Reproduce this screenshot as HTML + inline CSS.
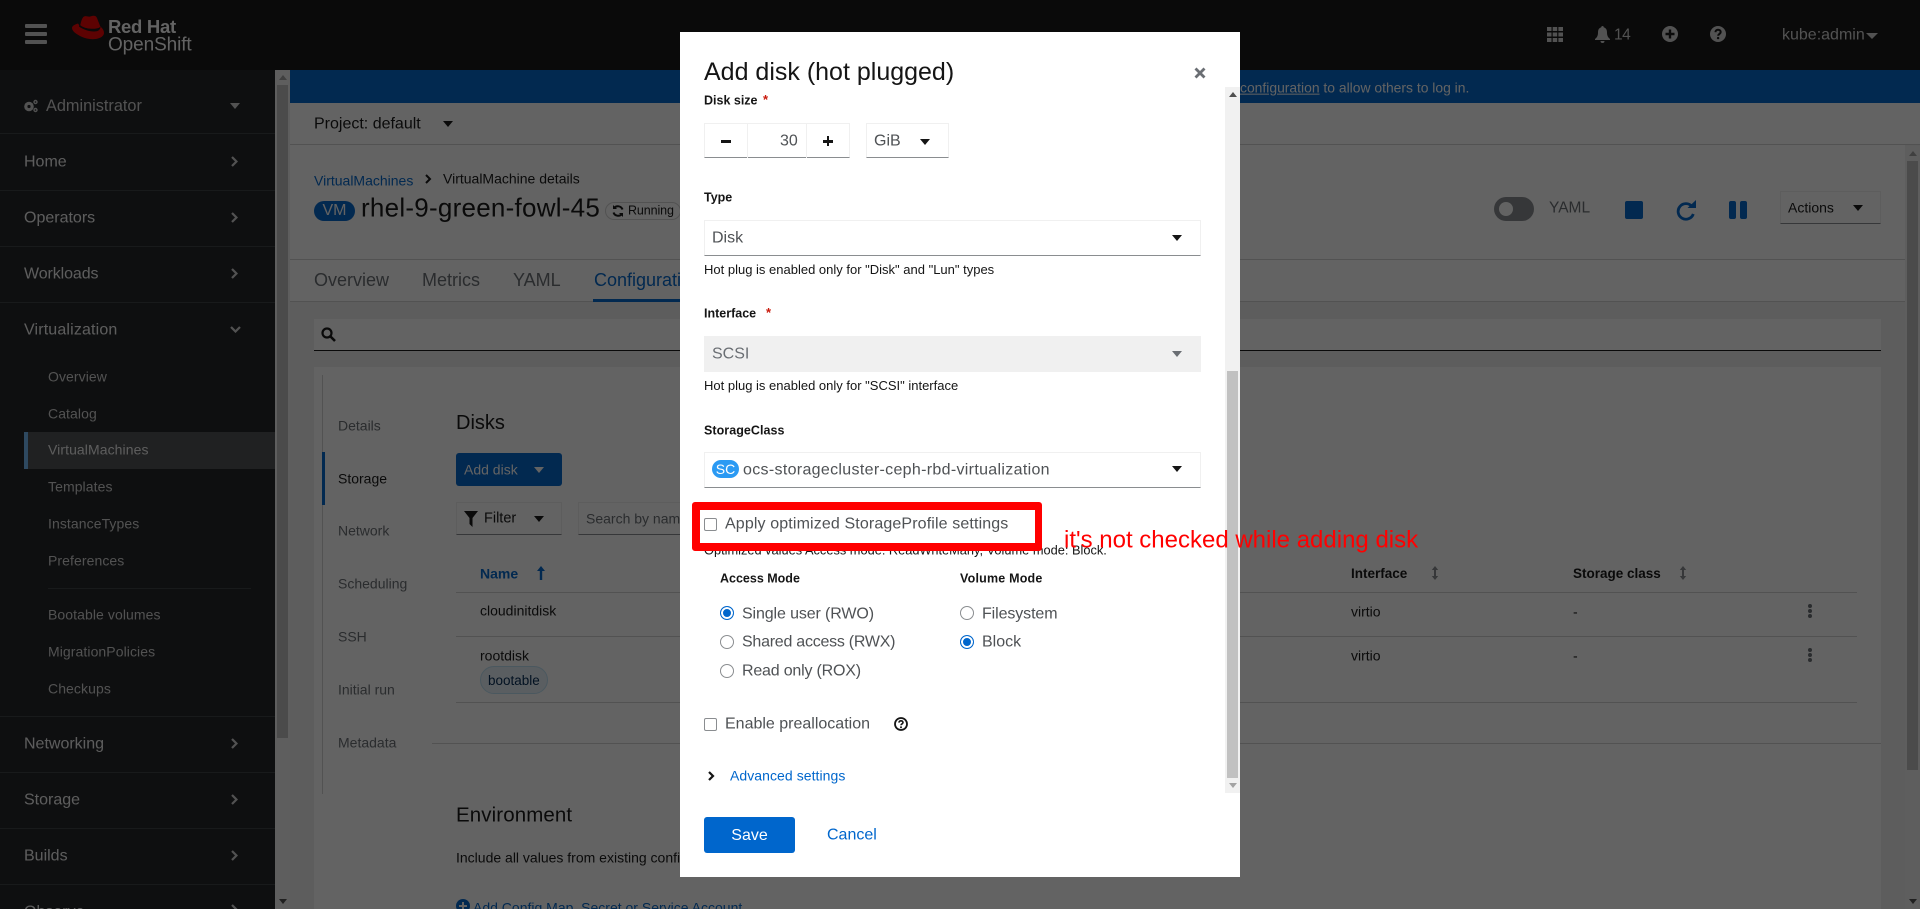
<!DOCTYPE html>
<html lang="en"><head><meta charset="utf-8"><title>Add disk</title>
<style>
*{box-sizing:border-box}
html,body{margin:0;padding:0;width:1920px;height:909px;overflow:hidden;background:#fff;font-family:"Liberation Sans",sans-serif;color:#151515}
.a{position:absolute}
.t{position:absolute;white-space:nowrap;line-height:1.2;transform:translateY(calc(-50% + 1px))}
svg{display:block}
#page{position:absolute;left:0;top:0;width:1920px;height:909px;overflow:hidden}
.side{color:#f0f0f0;font-size:16px}
.sub{color:#d2d2d2;font-size:14px;letter-spacing:.08px}
.ln{position:absolute;left:0;width:275px;height:1px;background:#3c3f42}
.nav{color:#6a6e73;font-size:14px}
.hr{position:absolute;height:1px;background:#d2d2d2}
.lbl{font-size:12.5px;font-weight:700;color:#151515}
.help{font-size:13px;color:#151515}
.sel{position:absolute;left:704px;width:497px;background:#fff;border:1px solid #f0f0f0;border-bottom:1px solid #8a8d90}
.car{position:absolute;width:0;height:0;border-left:5.5px solid transparent;border-right:5.5px solid transparent;border-top:6px solid #151515}
.radio{position:absolute;width:14px;height:14px;border-radius:50%;background:#fff;border:1px solid #8a8d90}
.radio.on{border:1px solid #06c;box-shadow:inset 0 0 0 2px #fff;background:#06c}
.cb{position:absolute;width:13px;height:13px;border:1px solid #8a8d90;border-radius:2px;background:#fff}
</style></head><body>
<div id="page">
<!-- header -->
<div class="a" style="left:0;top:0;width:1920px;height:70px;background:#151515"></div>
<div class="a" style="left:25px;top:24px;width:22px;height:4px;background:#d2d2d2;border-radius:1px"></div>
<div class="a" style="left:25px;top:32px;width:22px;height:4px;background:#d2d2d2;border-radius:1px"></div>
<div class="a" style="left:25px;top:40px;width:22px;height:4px;background:#d2d2d2;border-radius:1px"></div>
<svg class="a" style="left:71px;top:14px" width="34" height="26" viewBox="0 0 34 26"><path d="M9 12C10 8 11 3.500 13 2.500C15 1.500 17 3 19 2.500C22 1.500 25 1 26 4L29.500 13C25 16 14 15 9 12Z" fill="#e00"/><path d="M7 9.500C3.500 10.500 1 12 1 14C1 17 5 20 10 22.500C15 25 22 26 27 24.500C31 23.500 33 21 33 19C33 16 31 14 29.500 12.500C30 15 27 17 21 16.500C15 16 9 13 7 9.500Z" fill="#e00"/><path d="M8.500 10.500C8.200 11.500 8 12 8 12.500C12 15.500 18 17.500 23 17.500C27 17.500 29.500 16 29 13C27.500 15 24 15.500 20 15C15 14.500 11 13 8.500 10.500Z" fill="#151515"/></svg>
<div class="t" style="left:108px;top:26px;font-size:18.500px;font-weight:700;color:#fff;letter-spacing:-.3px">Red Hat</div>
<div class="t" style="left:108px;top:45px;font-size:19px;color:#fff;letter-spacing:-.1px">OpenShift</div>
<svg class="a" style="left:1547px;top:27px" width="16" height="15" viewBox="0 0 16 15" fill="#d2d2d2"><rect x="0" y="0" width="4.500" height="4"/><rect x="5.700" y="0" width="4.500" height="4"/><rect x="11.400" y="0" width="4.600" height="4"/><rect x="0" y="5.500" width="4.500" height="4"/><rect x="5.700" y="5.500" width="4.500" height="4"/><rect x="11.400" y="5.500" width="4.600" height="4"/><rect x="0" y="11" width="4.500" height="4"/><rect x="5.700" y="11" width="4.500" height="4"/><rect x="11.400" y="11" width="4.600" height="4"/></svg>
<svg class="a" style="left:1595px;top:26px" width="15" height="17" viewBox="0 0 15 17" fill="#d2d2d2"><path d="M7.500 0c-.8 0-1.300.6-1.300 1.400C3.800 2 3 4 3 6.500c0 3-1 5-3 6.500v1h15v-1c-2-1.500-3-3.500-3-6.500 0-2.500-.8-4.500-3.200-5.100C8.800.6 8.300 0 7.500 0zM5.500 15a2 2 0 0 0 4 0z"/></svg>
<div class="t" style="left:1614px;top:35px;font-size:15.500px;color:#d2d2d2;letter-spacing:-.5px">14</div>
<svg class="a" style="left:1662px;top:26px" width="16" height="16" viewBox="0 0 16 16"><circle cx="8" cy="8" r="8" fill="#d2d2d2"/><path d="M8 3.500v9M3.500 8h9" stroke="#151515" stroke-width="2.400"/></svg>
<svg class="a" style="left:1710px;top:26px" width="16" height="16" viewBox="0 0 16 16"><circle cx="8" cy="8" r="8" fill="#d2d2d2"/><path d="M5.400 6.200C5.500 4.600 6.600 3.700 8 3.700s2.700.8 2.700 2.300c0 1.800-2.500 2-2.500 3.700" fill="none" stroke="#151515" stroke-width="2"/><circle cx="8.100" cy="12.100" r="1.200" fill="#151515"/></svg>
<div class="t" style="left:1782px;top:34px;font-size:16px;color:#d2d2d2">kube:admin</div>
<div class="car" style="left:1866px;top:33px;border-top-color:#d2d2d2;border-left-width:6px;border-right-width:6px"></div>

<!-- main white -->
<div class="a" style="left:275px;top:70px;width:1645px;height:839px;background:#f0f0f0"></div>
<div class="a" style="left:290px;top:70px;width:1630px;height:33px;background:#06c"></div>
<div class="t" style="left:1240px;top:87px;font-size:13.900px;color:#fff;white-space:nowrap"><span style="text-decoration:underline">configuration</span> to allow others to log in.</div>
<div class="a" style="left:290px;top:103px;width:1630px;height:42px;background:#fff;border-bottom:1px solid #d2d2d2"></div>
<div class="t" style="left:314px;top:123px;font-size:16px">Project: default</div>
<div class="car" style="left:443px;top:121px"></div>
<div class="a" style="left:290px;top:145px;width:1615px;height:157px;background:#fff"></div>
<div class="t" style="left:314px;top:180px;font-size:14px;color:#06c">VirtualMachines</div>
<svg class="a" style="left:425px;top:174px" width="7" height="10" viewBox="0 0 7 10"><path d="M1 1l4 4-4 4" fill="none" stroke="#151515" stroke-width="2"/></svg>
<div class="t" style="left:443px;top:178px;font-size:14px">VirtualMachine details</div>
<div class="a" style="left:314px;top:201px;width:41px;height:20px;border-radius:10px;background:#06c;color:#fff;font-size:16px;line-height:20px;text-align:center">VM</div>
<div class="t" style="left:361px;top:207px;font-size:26px;letter-spacing:.25px">rhel-9-green-fowl-45</div>
<div class="a" style="left:605px;top:202px;width:76px;height:18px;border:1px solid #d2d2d2;border-radius:9px"></div>
<svg class="a" style="left:612px;top:205px" width="12" height="12" viewBox="0 0 12 12"><path d="M10.500 4.500A5 5 0 0 0 2 3M1.500 7.500A5 5 0 0 0 10 9" fill="none" stroke="#151515" stroke-width="2"/><path d="M1 0v4h4zM11 12V8H7z" fill="#151515"/></svg>
<div class="t" style="left:628px;top:210px;font-size:12.500px;letter-spacing:-.1px">Running</div>
<div class="a" style="left:1494px;top:197px;width:40px;height:24px;border-radius:12px;background:#8a8d90"></div>
<div class="a" style="left:1499px;top:202px;width:14px;height:14px;border-radius:50%;background:#fff"></div>
<div class="t" style="left:1549px;top:208px;font-size:15.500px;color:#6a6e73">YAML</div>
<div class="a" style="left:1625px;top:201px;width:18px;height:18px;border-radius:2px;background:#06c"></div>
<svg class="a" style="left:1675px;top:199px" width="22" height="22" viewBox="0 0 22 22"><path d="M17 7.500A7.800 7.800 0 1 0 18.300 15" fill="none" stroke="#06c" stroke-width="2.800"/><path d="M12.500 9h8.500V1z" fill="#06c"/></svg>
<div class="a" style="left:1729px;top:201px;width:7px;height:18px;border-radius:2px;background:#06c"></div>
<div class="a" style="left:1740px;top:201px;width:7px;height:18px;border-radius:2px;background:#06c"></div>
<div class="a" style="left:1780px;top:191px;width:101px;height:33px;background:#fff;border:1px solid #f0f0f0;border-bottom:1px solid #8a8d90"></div>
<div class="t" style="left:1788px;top:207px;font-size:14px">Actions</div>
<div class="car" style="left:1853px;top:205px;border-left-width:5px;border-right-width:5px"></div>

<div class="hr" style="left:290px;top:259px;width:1615px"></div>
<div class="hr" style="left:290px;top:301px;width:1615px"></div>
<div class="t" style="left:314px;top:280px;font-size:18px;color:#6a6e73">Overview</div>
<div class="t" style="left:422px;top:280px;font-size:18px;color:#6a6e73">Metrics</div>
<div class="t" style="left:513px;top:280px;font-size:18px;color:#6a6e73">YAML</div>
<div class="t" style="left:594px;top:280px;font-size:18px;color:#06c">Configuration</div>
<div class="a" style="left:593px;top:299px;width:100px;height:3px;background:#06c"></div>

<div class="a" style="left:314px;top:319px;width:1567px;height:32px;background:#fff;border-bottom:1px solid #151515"></div>
<svg class="a" style="left:321px;top:327px" width="15" height="15" viewBox="0 0 15 15"><circle cx="6" cy="6" r="4.500" fill="none" stroke="#151515" stroke-width="2.200"/><path d="M9.500 9.500L14 14" stroke="#151515" stroke-width="2.600"/></svg>

<div class="a" style="left:314px;top:367px;width:1567px;height:542px;background:#fff"></div>
<div class="a" style="left:322px;top:375px;width:1px;height:419px;background:#d2d2d2"></div>
<div class="a" style="left:322px;top:452px;width:3px;height:53px;background:#06c"></div>
<div class="t nav" style="left:338px;top:425px">Details</div>
<div class="t nav" style="left:338px;top:478px;color:#151515">Storage</div>
<div class="t nav" style="left:338px;top:530px">Network</div>
<div class="t nav" style="left:338px;top:583px">Scheduling</div>
<div class="t nav" style="left:338px;top:636px">SSH</div>
<div class="t nav" style="left:338px;top:689px">Initial run</div>
<div class="t nav" style="left:338px;top:742px">Metadata</div>
<div class="t" style="left:456px;top:422px;font-size:20px">Disks</div>
<div class="a" style="left:456px;top:453px;width:106px;height:33px;background:#06c;border-radius:3px"></div>
<div class="t" style="left:464px;top:469px;font-size:14px;color:#fff">Add disk</div>
<div class="car" style="left:534px;top:467px;border-top-color:#fff;border-left-width:5px;border-right-width:5px"></div>
<div class="a" style="left:456px;top:502px;width:106px;height:33px;background:#fff;border:1px solid #f0f0f0;border-bottom:1px solid #8a8d90"></div>
<svg class="a" style="left:464px;top:511px" width="14" height="16" viewBox="0 0 14 16"><path d="M0 0h14L8.500 7v9L5.500 13V7z" fill="#151515"/></svg>
<div class="t" style="left:484px;top:518px;font-size:14.500px">Filter</div>
<div class="car" style="left:534px;top:516px;border-left-width:5px;border-right-width:5px"></div>
<div class="a" style="left:578px;top:502px;width:110px;height:33px;background:#fff;border:1px solid #f0f0f0;border-bottom:1px solid #8a8d90"></div>
<div class="t" style="left:586px;top:518px;font-size:14px;color:#6a6e73">Search by name...</div>
<div class="t" style="left:480px;top:573px;font-size:14px;font-weight:700;color:#06c">Name</div>
<svg class="a" style="left:537px;top:566px" width="8" height="14" viewBox="0 0 8 14"><path d="M4 0L0 5h2.800v9h2.400V5H8z" fill="#06c"/></svg>
<div class="t" style="left:1351px;top:573px;font-size:13.500px;font-weight:700">Interface</div>
<svg class="a" style="left:1431px;top:566px" width="8" height="14" viewBox="0 0 8 14"><path d="M4 0L.8 4h2.200v6H.8L4 14l3.200-4H5V4h2.200z" fill="#8a8d90"/></svg>
<div class="t" style="left:1573px;top:573px;font-size:13.500px;font-weight:700">Storage class</div>
<svg class="a" style="left:1679px;top:566px" width="8" height="14" viewBox="0 0 8 14"><path d="M4 0L.8 4h2.200v6H.8L4 14l3.200-4H5V4h2.200z" fill="#8a8d90"/></svg>
<div class="hr" style="left:456px;top:592px;width:1401px"></div>
<div class="hr" style="left:456px;top:636px;width:1401px"></div>
<div class="hr" style="left:456px;top:702px;width:1401px"></div>
<div class="hr" style="left:432px;top:743px;width:1449px"></div>
<div class="t" style="left:480px;top:610px;font-size:14px">cloudinitdisk</div>
<div class="t" style="left:480px;top:655px;font-size:14px">rootdisk</div>
<div class="a" style="left:480px;top:666px;width:68px;height:28px;border-radius:14px;background:#e7f1fa;border:1px solid #bee1f4"></div>
<div class="t" style="left:488px;top:680px;font-size:13.500px;color:#002952">bootable</div>
<div class="t" style="left:1351px;top:611px;font-size:14px">virtio</div>
<div class="t" style="left:1351px;top:655px;font-size:14px">virtio</div>
<div class="t" style="left:1573px;top:611px;font-size:14px">-</div>
<div class="t" style="left:1573px;top:655px;font-size:14px">-</div>
<svg class="a" style="left:1808px;top:604px" width="4" height="14" viewBox="0 0 4 14" fill="#6a6e73"><circle cx="2" cy="2" r="2"/><circle cx="2" cy="7" r="2"/><circle cx="2" cy="12" r="2"/></svg>
<svg class="a" style="left:1808px;top:648px" width="4" height="14" viewBox="0 0 4 14" fill="#6a6e73"><circle cx="2" cy="2" r="2"/><circle cx="2" cy="7" r="2"/><circle cx="2" cy="12" r="2"/></svg>
<div class="t" style="left:456px;top:815px;font-size:20.500px;letter-spacing:.1px">Environment</div>
<div class="t" style="left:456px;top:857px;font-size:14px">Include all values from existing config maps, secrets or service accounts</div>
<svg class="a" style="left:456px;top:899px" width="14" height="14" viewBox="0 0 14 14"><circle cx="7" cy="7" r="7" fill="#06c"/><path d="M7 3v8M3 7h8" stroke="#fff" stroke-width="2"/></svg>
<div class="t" style="left:473px;top:907px;font-size:14px;color:#06c">Add Config Map, Secret or Service Account</div>

<!-- sidebar -->
<div class="a" style="left:0;top:70px;width:275px;height:839px;background:#212427"></div>
<svg class="a" style="left:24px;top:99px" width="14" height="14" viewBox="0 0 14 14" fill="#d2d2d2"><circle cx="5" cy="7.500" r="4.800"/><circle cx="5" cy="7.500" r="1.600" fill="#212427"/><circle cx="11.500" cy="3" r="2.200"/><circle cx="11.500" cy="3" r=".8" fill="#212427"/><circle cx="11.500" cy="11" r="2.200"/><circle cx="11.500" cy="11" r=".8" fill="#212427"/></svg>
<div class="t side" style="left:46px;top:106px;color:#d2d2d2;font-size:16.300px">Administrator</div>
<div class="car" style="left:230px;top:103px;border-top-color:#d2d2d2;border-left-width:5px;border-right-width:5px"></div>
<div class="ln" style="top:133px"></div><div class="ln" style="top:190px"></div><div class="ln" style="top:246px"></div><div class="ln" style="top:302px"></div><div class="ln" style="top:716px"></div><div class="ln" style="top:772px"></div><div class="ln" style="top:828px"></div><div class="ln" style="top:884px"></div>
<div class="t side" style="left:24px;top:161px">Home</div>
<div class="t side" style="left:24px;top:217px">Operators</div>
<div class="t side" style="left:24px;top:273px;letter-spacing:-.1px">Workloads</div>
<div class="t side" style="left:24px;top:329px;letter-spacing:.15px">Virtualization</div>
<div class="t side" style="left:24px;top:743px">Networking</div>
<div class="t side" style="left:24px;top:799px">Storage</div>
<div class="t side" style="left:24px;top:855px">Builds</div>
<div class="t side" style="left:24px;top:911px">Observe</div>
<svg class="a" style="left:231px;top:156px" width="7" height="11" viewBox="0 0 7 11"><path d="M1 1l4.500 4.500L1 10" fill="none" stroke="#d2d2d2" stroke-width="2.200"/></svg>
<svg class="a" style="left:231px;top:212px" width="7" height="11" viewBox="0 0 7 11"><path d="M1 1l4.500 4.500L1 10" fill="none" stroke="#d2d2d2" stroke-width="2.200"/></svg>
<svg class="a" style="left:231px;top:268px" width="7" height="11" viewBox="0 0 7 11"><path d="M1 1l4.500 4.500L1 10" fill="none" stroke="#d2d2d2" stroke-width="2.200"/></svg>
<svg class="a" style="left:230px;top:326px" width="11" height="7" viewBox="0 0 11 7"><path d="M1 1l4.500 4.500L10 1" fill="none" stroke="#d2d2d2" stroke-width="2.200"/></svg>
<svg class="a" style="left:231px;top:738px" width="7" height="11" viewBox="0 0 7 11"><path d="M1 1l4.500 4.500L1 10" fill="none" stroke="#d2d2d2" stroke-width="2.200"/></svg>
<svg class="a" style="left:231px;top:794px" width="7" height="11" viewBox="0 0 7 11"><path d="M1 1l4.500 4.500L1 10" fill="none" stroke="#d2d2d2" stroke-width="2.200"/></svg>
<svg class="a" style="left:231px;top:850px" width="7" height="11" viewBox="0 0 7 11"><path d="M1 1l4.500 4.500L1 10" fill="none" stroke="#d2d2d2" stroke-width="2.200"/></svg>
<svg class="a" style="left:231px;top:904px" width="7" height="11" viewBox="0 0 7 11"><path d="M1 1l4.500 4.500L1 10" fill="none" stroke="#d2d2d2" stroke-width="2.200"/></svg>
<div class="a" style="left:24px;top:432px;width:251px;height:37px;background:#4f5255"></div>
<div class="a" style="left:24px;top:432px;width:4px;height:37px;background:#73bcf7"></div>
<div class="t sub" style="left:48px;top:376px">Overview</div>
<div class="t sub" style="left:48px;top:413px">Catalog</div>
<div class="t sub" style="left:48px;top:449px;color:#f0f0f0">VirtualMachines</div>
<div class="t sub" style="left:48px;top:486px">Templates</div>
<div class="t sub" style="left:48px;top:523px">InstanceTypes</div>
<div class="t sub" style="left:48px;top:560px">Preferences</div>
<div class="a" style="left:48px;top:588px;width:203px;height:1px;background:#3c3f42"></div>
<div class="t sub" style="left:48px;top:614px">Bootable volumes</div>
<div class="t sub" style="left:48px;top:651px">MigrationPolicies</div>
<div class="t sub" style="left:48px;top:688px">Checkups</div>

<!-- scrollbars -->
<div class="a" style="left:275px;top:70px;width:15px;height:839px;background:#f1f1f1"></div>
<div class="a" style="left:277px;top:85px;width:11px;height:653px;background:#c1c1c1"></div>
<div class="a" style="left:279px;top:75px;border-left:4px solid transparent;border-right:4px solid transparent;border-bottom:5px solid #a3a3a3"></div>
<div class="a" style="left:279px;top:899px;border-left:4px solid transparent;border-right:4px solid transparent;border-top:5px solid #505050"></div>
<div class="a" style="left:1905px;top:146px;width:15px;height:763px;background:#f1f1f1"></div>
<div class="a" style="left:1907px;top:161px;width:11px;height:609px;background:#c1c1c1"></div>
<div class="a" style="left:1909px;top:151px;border-left:4px solid transparent;border-right:4px solid transparent;border-bottom:5px solid #a3a3a3"></div>
<div class="a" style="left:1909px;top:899px;border-left:4px solid transparent;border-right:4px solid transparent;border-top:5px solid #505050"></div>

<!-- backdrop -->
<div class="a" style="left:0;top:0;width:1920px;height:909px;background:rgba(3,3,3,.62)"></div>

<!-- modal -->
<div class="a" style="left:680px;top:32px;width:560px;height:845px;background:#fff"></div>
<div class="t" style="left:704px;top:71px;font-size:25px">Add disk (hot plugged)</div>
<svg class="a" style="left:1194px;top:67px" width="12" height="12" viewBox="0 0 12 12"><path d="M1.500 1.500l9 9M10.500 1.500l-9 9" stroke="#6a6e73" stroke-width="2.800"/></svg>
<div class="a" style="left:1225px;top:87px;width:15px;height:706px;background:#f1f1f1"></div>
<div class="a" style="left:1227px;top:371px;width:11px;height:407px;background:#c1c1c1"></div>
<div class="a" style="left:1229px;top:92px;border-left:4px solid transparent;border-right:4px solid transparent;border-bottom:5px solid #505050"></div>
<div class="a" style="left:1229px;top:783px;border-left:4px solid transparent;border-right:4px solid transparent;border-top:5px solid #a3a3a3"></div>

<div class="t lbl" style="left:704px;top:100px">Disk size</div>
<div class="t" style="left:763px;top:99px;font-size:13px;font-weight:700;color:#c9190b">*</div>
<div class="a" style="left:704px;top:123px;width:146px;height:35px;border:1px solid #f0f0f0;border-bottom:1px solid #8a8d90"></div>
<div class="a" style="left:747px;top:123px;width:1px;height:35px;background:#f0f0f0"></div>
<div class="a" style="left:806px;top:123px;width:1px;height:35px;background:#f0f0f0"></div>
<div class="a" style="left:721px;top:140px;width:10px;height:2.500px;background:#151515"></div>
<div class="a" style="left:823px;top:140px;width:10px;height:2.500px;background:#151515"></div>
<div class="a" style="left:826.800px;top:136px;width:2.500px;height:10px;background:#151515"></div>
<div class="t" style="left:780px;top:140px;font-size:16px;color:#4f5255">30</div>
<div class="a" style="left:866px;top:123px;width:83px;height:35px;border:1px solid #f0f0f0;border-bottom:1px solid #8a8d90"></div>
<div class="t" style="left:874px;top:140px;font-size:16px;color:#4f5255">GiB</div>
<div class="car" style="left:920px;top:139px;border-left-width:5px;border-right-width:5px"></div>

<div class="t lbl" style="left:704px;top:197px">Type</div>
<div class="sel" style="top:220px;height:36px"></div>
<div class="t" style="left:712px;top:237px;font-size:16px;color:#4f5255">Disk</div>
<div class="car" style="left:1172px;top:235px"></div>
<div class="t help" style="left:704px;top:269px">Hot plug is enabled only for "Disk" and "Lun" types</div>

<div class="t lbl" style="left:704px;top:313px">Interface</div>
<div class="t" style="left:766px;top:312px;font-size:13px;font-weight:700;color:#c9190b">*</div>
<div class="a" style="left:704px;top:336px;width:497px;height:36px;background:#f0f0f0"></div>
<div class="t" style="left:712px;top:353px;font-size:16px;color:#6a6e73">SCSI</div>
<div class="car" style="left:1172px;top:351px;border-top-color:#6a6e73"></div>
<div class="t help" style="left:704px;top:385px">Hot plug is enabled only for "SCSI" interface</div>

<div class="t lbl" style="left:704px;top:430px;letter-spacing:.05px">StorageClass</div>
<div class="sel" style="top:452px;height:36px"></div>
<div class="a" style="left:712px;top:460px;width:27px;height:18px;border-radius:9px;background:#2b9af3;color:#fff;font-size:14px;line-height:18px;text-align:center">SC</div>
<div class="t" style="left:743px;top:469px;font-size:16px;letter-spacing:.32px;color:#4f5255">ocs-storagecluster-ceph-rbd-virtualization</div>
<div class="car" style="left:1172px;top:466px"></div>

<div class="cb" style="left:704px;top:518px"></div>
<div class="t" style="left:725px;top:523px;font-size:16px;letter-spacing:.13px;color:#4f5255">Apply optimized StorageProfile settings</div>
<div class="t" style="left:704px;top:549px;font-size:12.800px;color:#151515">Optimized values Access mode: ReadWriteMany, Volume mode: Block.</div>

<div class="t lbl" style="left:720px;top:578px">Access Mode</div>
<div class="t lbl" style="left:960px;top:578px;letter-spacing:.2px">Volume Mode</div>
<div class="radio on" style="left:720px;top:606px"></div>
<div class="t" style="left:742px;top:613px;font-size:16px;letter-spacing:-.12px;color:#4f5255">Single user (RWO)</div>
<div class="radio" style="left:720px;top:635px"></div>
<div class="t" style="left:742px;top:641px;font-size:16px;letter-spacing:-.25px;color:#4f5255">Shared access (RWX)</div>
<div class="radio" style="left:720px;top:664px"></div>
<div class="t" style="left:742px;top:670px;font-size:16px;letter-spacing:-.2px;color:#4f5255">Read only (ROX)</div>
<div class="radio" style="left:960px;top:606px"></div>
<div class="t" style="left:982px;top:613px;font-size:16px;letter-spacing:-.1px;color:#4f5255">Filesystem</div>
<div class="radio on" style="left:960px;top:635px"></div>
<div class="t" style="left:982px;top:641px;font-size:16px;color:#4f5255">Block</div>
<div class="cb" style="left:704px;top:718px"></div>
<div class="t" style="left:725px;top:723px;font-size:16px;color:#4f5255">Enable preallocation</div>
<svg class="a" style="left:894px;top:717px" width="14" height="14" viewBox="0 0 14 14"><circle cx="7" cy="7" r="6" fill="none" stroke="#151515" stroke-width="1.800"/><path d="M5 5.600C5 4.400 5.900 3.800 7 3.800s2 .7 2 1.700c0 1.400-2 1.500-2 2.800" fill="none" stroke="#151515" stroke-width="1.600"/><circle cx="7" cy="10.300" r="1" fill="#151515"/></svg>
<svg class="a" style="left:708px;top:771px" width="7" height="10" viewBox="0 0 7 10"><path d="M1 1l4 4-4 4" fill="none" stroke="#151515" stroke-width="2.200"/></svg>
<div class="t" style="left:730px;top:775px;font-size:14px;letter-spacing:.06px;color:#06c">Advanced settings</div>
<div class="a" style="left:704px;top:817px;width:91px;height:36px;background:#06c;border-radius:3px;color:#fff;font-size:16px;line-height:37px;text-align:center">Save</div>
<div class="t" style="left:827px;top:834px;font-size:16px;color:#06c">Cancel</div>

<!-- annotation -->
<div class="a" style="left:692px;top:502px;width:350px;height:49px;border:8px solid #f00;border-right-width:7px;border-radius:3px"></div>
<div class="t" style="left:1064px;top:540px;font-size:24px;color:#f00">it's not checked while adding disk</div>
</div>
</body></html>
